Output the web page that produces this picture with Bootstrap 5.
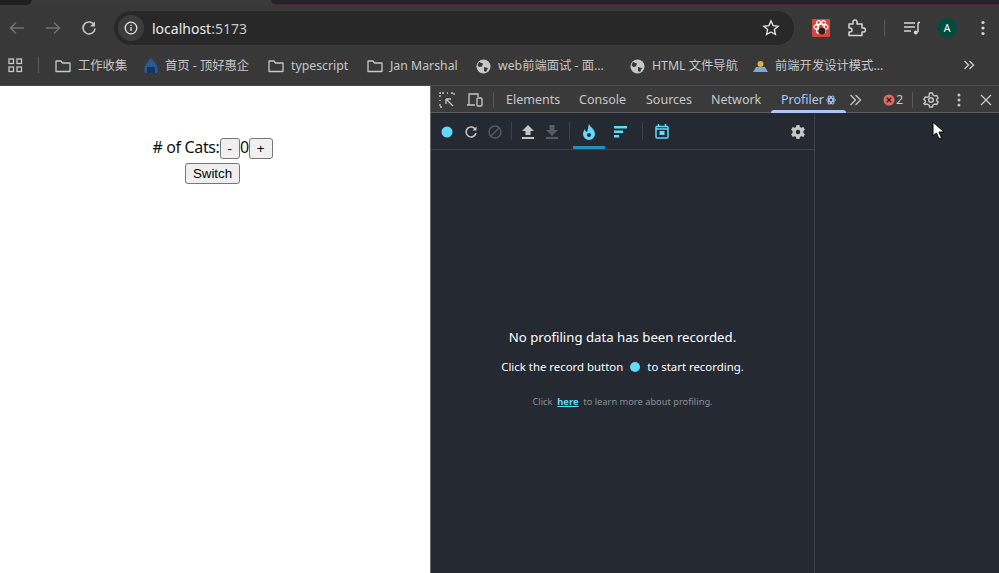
<!DOCTYPE html>
<html lang="zh-CN"><head><meta charset="utf-8"><title>localhost:5173</title>
<link href="https://cdn.jsdelivr.net/npm/bootstrap@5.3.0/dist/css/bootstrap.min.css" rel="stylesheet">
<style>
html,body{height:100%;overflow:hidden;background:#fff}
body{font-family:"Noto Sans","Noto Sans CJK SC",sans-serif;width:999px;height:573px;position:relative}
.tabstrip{height:5px;background:#3a3a3a}
.tabstrip-l{width:32px;background:#1f1f1f;border-radius:0 0 8px 0}
.tabstrip-r{margin-left:239px;background:#22232a;border-bottom:1px solid #4a2a2e;border-radius:0 0 0 8px}
.tb{height:46px;background:#383838;padding-left:3px}
.ic{flex:none;display:block}
.tb-btn{width:28px;height:28px;margin-right:8px}
.omni{margin-left:3px;width:680px;height:34px;background:#282828;border-radius:17px;padding:0 6px 0 4px;color:#e8eaed;font-size:14px}
.omni-i{width:26px;height:26px;background:#3c3c3c;border-radius:50%;margin-right:8px}
.port{color:#c4c7c5}
.avatar{width:20px;height:20px;border-radius:50%;background:#004d40;color:#fff;font-size:10.5px;line-height:20px;text-align:center}
.vsep{width:1px;height:16px;background:#5a5a5a}
.bm{height:35px;background:#383838;border-bottom:1px solid #4a4a4a;padding:0 0 6px 8px;color:#c7c7c7;font-size:12.3px;white-space:nowrap}
.bm-item{gap:7px;position:absolute;top:57px}
.stage{height:487px}
.pagepane{width:430px;color:#111;font-family:"Noto Sans",sans-serif;font-size:16px;letter-spacing:-.35px;padding:50px 5px 0 0}
.catrow{height:22px;line-height:22px}
.fakebtn{font-family:"Liberation Sans",sans-serif;font-size:13.3px;letter-spacing:0;line-height:17px;background:#efefef;color:#000;border:1px solid #767676;border-radius:3px;padding:1px 7px;height:21px;vertical-align:baseline}
.switchrow{margin-top:2px}
.dev{width:569px;border-left:1px solid #6b6b6b;background:#252932}
.devtabs{height:27px;background:#3a3a3a;border-bottom:1px solid #5c5c5c;color:#c7c7c7;font-size:12.5px;white-space:nowrap;position:relative}
.dt{position:absolute;top:6px;line-height:16px}
.dt-on{color:#a8c7fa}
.dt-line{position:absolute;left:340px;top:24px;width:75px;height:3px;background:#a8c7fa;border-radius:3px 3px 0 0}
.dico{position:absolute}
.errn{position:absolute;left:465px;top:6px;line-height:16px;color:#c7c7c7}
.devbody{height:460px}
.rp-main{width:384px;border-right:1px solid #3d424b}
.rp-bar{height:37px;border-bottom:1px solid #3d424b;position:relative}
.rp-bar .dico{margin-top:1px}
.rp-sep{position:absolute;top:9px;width:1px;height:18px;background:#3d424b}
.rp-ul{position:absolute;left:142px;top:33px;width:32px;height:3px;background:#1f8fbf}
.rp-empty{padding-top:177px;color:#fff;text-align:center}
.e1{font-size:13.2px;line-height:20px}
.e2{font-size:11.4px;line-height:18px;margin-top:11px}
.recdot{display:inline-block;width:10px;height:10px;border-radius:50%;background:#61dafb;margin:0 7px;vertical-align:-1px}
.e3{font-size:9.3px;line-height:14px;color:#8b8f96;margin-top:19px}
.e3 a{color:#61dafb;font-weight:700}
.cursor{position:absolute;left:932px;top:121px}
</style></head><body>
<div class="tabstrip d-flex"><div class="tabstrip-l"></div><div class="tabstrip-r flex-grow-1"></div></div>
<div class="tb d-flex align-items-center">
 <svg class="ic tb-btn" viewBox="0 0 28 28" fill="none" stroke="#6f6f6f" stroke-width="1.6"><path d="M21 14H8M13 8.5 7.5 14l5.500 5.500"/></svg>
 <svg class="ic tb-btn" viewBox="0 0 28 28" fill="none" stroke="#6f6f6f" stroke-width="1.600"><path d="M7 14h13M15 8.500l5.500 5.500-5.500 5.500"/></svg>
 <svg class="ic tb-btn" viewBox="0 0 28 28" fill="none" stroke="#c7c7c7" stroke-width="1.600"><path d="M19.500 11.500A6 6 0 1 0 20 14.500"/><path d="M20 7.500v5h-5" fill="#c7c7c7" stroke="none"/></svg>
 <div class="omni d-flex align-items-center">
  <div class="omni-i d-flex align-items-center justify-content-center"><svg class="ic" width="14" height="14" viewBox="0 0 14 14" fill="none" stroke="#e3e3e3" stroke-width="1.300"><circle cx="7" cy="7" r="5.800"/><path d="M7 6v4M7 3.800v1.300"/></svg></div>
  <span>localhost<span class="port">:5173</span></span>
  <svg class="ic ms-auto" width="18" height="18" viewBox="0 0 18 18" fill="none" stroke="#e3e3e3" stroke-width="1.400" style="margin-right:8px"><path d="m9 2 2.100 4.600 5 .6-3.700 3.400 1 4.900L9 13l-4.400 2.500 1-4.900L1.900 7.200l5-.6z"/></svg>
 </div>
 <svg class="ic" style="margin-left:18px" width="18" height="18" viewBox="0 0 18 18"><rect width="18" height="18" rx="1" fill="#d9453d"/><g fill="none" stroke="#fff" stroke-width="1.200"><ellipse cx="9" cy="8" rx="7" ry="2.800"/><ellipse cx="9" cy="8" rx="7" ry="2.800" transform="rotate(60 9 8)"/><ellipse cx="9" cy="8" rx="7" ry="2.800" transform="rotate(120 9 8)"/></g><circle cx="10" cy="12" r="3.500" fill="#222"/></svg>
 <svg class="ic ms-3" width="20" height="20" viewBox="0 0 20 20" fill="none" stroke="#d5d5d5" stroke-width="1.500"><path d="M3 6h4V4a2 2 0 0 1 4 0v2h5v4h1.500a2 2 0 0 1 0 4H16v3.500H3V14h1a2 2 0 0 0 0-4H3z" stroke-linejoin="round"/></svg>
 <div class="vsep" style="margin-left:18px"></div>
 <svg class="ic" style="margin-left:18px" width="18" height="18" viewBox="0 0 18 18" fill="none" stroke="#d5d5d5" stroke-width="1.500"><path d="M1 4h11M1 8h11M1 12h7"/><path d="M15 3.500V13"/><path d="M15 3.500h2"/><circle cx="12.800" cy="13.500" r="2" fill="#d5d5d5" stroke="none"/></svg>
 <div class="avatar" style="margin-left:16px">A</div>
 <svg class="ic" style="margin-left:18px" width="16" height="16" viewBox="0 0 16 16" fill="#d5d5d5"><circle cx="8" cy="2.500" r="1.600"/><circle cx="8" cy="8" r="1.600"/><circle cx="8" cy="13.500" r="1.600"/></svg>
</div>
<div class="bm d-flex align-items-center">
 <svg class="ic" width="15" height="15" viewBox="0 0 15 15" fill="none" stroke="#c7c7c7" stroke-width="1.300"><rect x="1" y="1" width="4.500" height="4.500"/><rect x="9" y="1" width="4.500" height="4.500"/><rect x="1" y="9" width="4.500" height="4.500"/><rect x="9" y="9" width="4.500" height="4.500"/></svg>
 <div class="vsep" style="margin-left:15px"></div>
 <div class="bm-item d-flex align-items-center" style="left:55px"><svg class="ic" width="16" height="16" viewBox="0 0 16 16" fill="none" stroke="#c7c7c7" stroke-width="1.300"><path d="M1 3h5l1.500 2H15v8.500H1z" stroke-linejoin="round"/></svg><span>工作收集</span></div>
 <div class="bm-item d-flex align-items-center" style="left:144px"><svg class="ic" width="14" height="16" viewBox="0 0 14 16"><path d="M7 0 12 6c2 3 2 7 1 9H1C0 13 0 9 2 6z" fill="#2a5a96"/><path d="M3 9h8v6H3z" fill="#17365f"/></svg><span>首页 - 顶好惠企</span></div>
 <div class="bm-item d-flex align-items-center" style="left:268px"><svg class="ic" width="16" height="16" viewBox="0 0 16 16" fill="none" stroke="#c7c7c7" stroke-width="1.300"><path d="M1 3h5l1.500 2H15v8.500H1z" stroke-linejoin="round"/></svg><span>typescript</span></div>
 <div class="bm-item d-flex align-items-center" style="left:367px"><svg class="ic" width="16" height="16" viewBox="0 0 16 16" fill="none" stroke="#c7c7c7" stroke-width="1.300"><path d="M1 3h5l1.500 2H15v8.500H1z" stroke-linejoin="round"/></svg><span>Jan Marshal</span></div>
 <div class="bm-item d-flex align-items-center" style="left:476px"><svg class="ic" width="15" height="15" viewBox="0 0 15 15"><circle cx="7.500" cy="7.500" r="7" fill="#c7c7c7"/><path d="M3 3l4 1.500-1 3-3 .5-1.500-2zM8 8l4 1-2 4-2-1z" fill="#383838"/></svg><span>web前端面试 - 面...</span></div>
 <div class="bm-item d-flex align-items-center" style="left:630px"><svg class="ic" width="15" height="15" viewBox="0 0 15 15"><circle cx="7.500" cy="7.500" r="7" fill="#c7c7c7"/><path d="M3 3l4 1.500-1 3-3 .5-1.500-2zM8 8l4 1-2 4-2-1z" fill="#383838"/></svg><span>HTML 文件导航</span></div>
 <div class="bm-item d-flex align-items-center" style="left:753px"><svg class="ic" width="15" height="15" viewBox="0 0 15 15"><path d="M0 13 3 8h9l3 5z" fill="#7fa8d8"/><circle cx="7.500" cy="5" r="3" fill="#e0b040"/></svg><span>前端开发设计模式...</span></div>
 <svg class="ic ms-auto" style="margin-right:24px" width="12" height="12" viewBox="0 0 12 12" fill="none" stroke="#c7c7c7" stroke-width="1.400"><path d="m1.500 2 4 4-4 4M6.500 2l4 4-4 4"/></svg>
</div>
<div class="stage d-flex">
 <div class="pagepane text-center">
  <div class="catrow"># of Cats:<button class="fakebtn">-</button>0<button class="fakebtn">+</button></div>
  <div class="switchrow"><button class="fakebtn">Switch</button></div>
 </div>
 <div class="dev">
  <div class="devtabs">
   <svg class="dico" style="left:8px;top:6px" width="16" height="16" viewBox="0 0 16 16" fill="none" stroke="#c7c7c7" stroke-width="1.300"><path d="M1 5V1h4M8 1h1M12 1h3v3M1 8v1M1 12v3h3" stroke-dasharray="2 1"/><path d="m7 7 7 7M7 7h5M7 7v5"/></svg>
   <svg class="dico" style="left:35px;top:6px" width="17" height="16" viewBox="0 0 17 16" fill="none" stroke="#c7c7c7" stroke-width="1.300"><path d="M1 13h8M3 13V2h9v3"/><rect x="11" y="6" width="5" height="8" rx="1"/></svg>
   <div class="dico vsep" style="left:62px;top:6px"></div>
   <span class="dt" style="left:75px">Elements</span><span class="dt" style="left:148px">Console</span><span class="dt" style="left:215px">Sources</span><span class="dt" style="left:280px">Network</span>
   <span class="dt dt-on" style="left:350px">Profiler</span>
   <svg class="dico" style="left:395px;top:9px" width="10" height="10" viewBox="0 0 10 10" fill="none" stroke="#a8c7fa"><ellipse cx="5" cy="5" rx="4.500" ry="1.800"/><ellipse cx="5" cy="5" rx="4.500" ry="1.800" transform="rotate(60 5 5)"/><ellipse cx="5" cy="5" rx="4.500" ry="1.800" transform="rotate(120 5 5)"/></svg>
   <div class="dt-line"></div>
   <svg class="dico" style="left:418px;top:8px" width="13" height="12" viewBox="0 0 13 12" fill="none" stroke="#c7c7c7" stroke-width="1.300"><path d="m1.500 1 5 5-5 5M6.500 1l5 5-5 5"/></svg>
   <svg class="dico" style="left:452px;top:8px" width="12" height="12" viewBox="0 0 12 12"><circle cx="6" cy="6" r="5.500" fill="#e46962"/><path d="m3.800 3.800 4.400 4.400M8.200 3.800 3.800 8.200" stroke="#2a1a1a" stroke-width="1.300"/></svg>
   <span class="errn">2</span>
   <div class="dico vsep" style="left:481px;top:6px"></div>
   <svg class="dico" style="left:492px;top:6px" width="16" height="16" viewBox="0 0 16 16" fill="none" stroke="#c7c7c7" stroke-width="1.400"><circle cx="8" cy="8" r="2.300"/><path d="M6.500 1h3l.4 2 1.800 1 2-.6 1.400 2.600-1.500 1.400v1.200l1.500 1.400-1.400 2.600-2-.6-1.800 1-.4 2h-3l-.4-2-1.800-1-2 .6L.9 11.400l1.500-1.400V8.800L.9 7.400l1.400-2.600 2 .6 1.800-1z" stroke-linejoin="round"/></svg>
   <svg class="dico" style="left:521px;top:6px" width="14" height="16" viewBox="0 0 14 16" fill="#c7c7c7"><circle cx="7" cy="3" r="1.500"/><circle cx="7" cy="8" r="1.500"/><circle cx="7" cy="13" r="1.500"/></svg>
   <svg class="dico" style="left:549px;top:8px" width="12" height="12" viewBox="0 0 12 12" fill="none" stroke="#c7c7c7" stroke-width="1.300"><path d="m1 1 10 10M11 1 1 11"/></svg>
  </div>
  <div class="devbody d-flex">
   <div class="rp-main">
    <div class="rp-bar">
     <svg class="dico" style="left:10px;top:12px" width="12" height="12"><circle cx="6" cy="6" r="5.500" fill="#61dafb"/></svg>
     <svg class="dico" style="left:33px;top:11px" width="14" height="14" viewBox="0 0 14 14" fill="none" stroke="#c7c7c7" stroke-width="1.500"><path d="M11.500 4.500A5 5 0 1 0 12 8"/><path d="M12.500 1.500v4h-4" fill="#c7c7c7" stroke="none"/></svg>
     <svg class="dico" style="left:57px;top:11px" width="14" height="14" viewBox="0 0 14 14" fill="none" stroke="#565b63" stroke-width="1.500"><circle cx="7" cy="7" r="6"/><path d="m3 11 8-8"/></svg>
     <div class="rp-sep" style="left:80px"></div>
     <svg class="dico" style="left:90px;top:11px" width="14" height="14" viewBox="0 0 14 14" fill="#c7c7c7"><path d="M7 0 13 6H9.500v4h-5V6H1zM1 12h12v2H1z"/></svg>
     <svg class="dico" style="left:114px;top:11px" width="14" height="14" viewBox="0 0 14 14" fill="#565b63"><path d="M4.500 0h5v5H13l-6 6-6-6h3.500zM1 12h12v2H1z"/></svg>
     <div class="rp-sep" style="left:138px"></div>
     <svg class="dico" style="left:151px;top:10px" width="14" height="16" viewBox="0 0 14 16" fill="#61dafb"><path d="M7 0c1 3 6 5 6 10a6 6 0 0 1-12 0c0-2 1-4 2-5 0 2 1 3 2 3 1-2 1-5 2-8z"/><circle cx="7" cy="11" r="2" fill="#252932"/></svg>
     <svg class="dico" style="left:183px;top:12px" width="14" height="12" viewBox="0 0 14 12" fill="#61dafb"><rect width="13" height="2.500"/><rect y="4.500" width="9" height="2.500"/><rect y="9" width="5" height="2.500"/></svg>
     <div class="rp-sep" style="left:211px"></div>
     <svg class="dico" style="left:224px;top:10px" width="14" height="15" viewBox="0 0 14 15" fill="none" stroke="#61dafb" stroke-width="1.500"><rect x="1" y="2.500" width="12" height="11.500" rx="1"/><path d="M3.500 0v3M10.500 0v3M1 5h12"/><rect x="4.500" y="7" width="5" height="4" fill="#61dafb" stroke="none"/></svg>
     <svg class="dico" style="left:360px;top:11px" width="14" height="14" viewBox="0 0 14 14" fill="#c7c7c7"><path fill-rule="evenodd" d="M5.500 0h3l.4 2 1.600.8 1.900-.7 1.500 2.600-1.500 1.400v1.800l1.500 1.400-1.500 2.600-1.900-.7-1.600.8-.4 2h-3l-.4-2-1.600-.8-1.900.7L.1 9.300l1.500-1.400V6.100L.1 4.700l1.500-2.600 1.900.7 1.600-.8zM7 4.800a2.200 2.200 0 1 0 0 4.400 2.200 2.200 0 0 0 0-4.400z"/></svg>
     <div class="rp-ul"></div>
    </div>
    <div class="rp-empty">
     <div class="e1">No profiling data has been recorded.</div>
     <div class="e2">Click the record button<span class="recdot"></span>to start recording.</div>
     <div class="e3">Click &nbsp;<a href="#">here</a>&nbsp; to learn more about profiling.</div>
    </div>
   </div>
   <div class="flex-grow-1"></div>
  </div>
 </div>
</div>
<svg class="cursor" width="13" height="19" viewBox="0 0 13 19"><path d="M1 1v14l3.500-3 2.500 6 2.500-1-2.500-6H12z" fill="#fff" stroke="#000"/></svg>
<script src="https://cdn.jsdelivr.net/npm/bootstrap@5.3.0/dist/js/bootstrap.bundle.min.js"></script>
</body></html>
